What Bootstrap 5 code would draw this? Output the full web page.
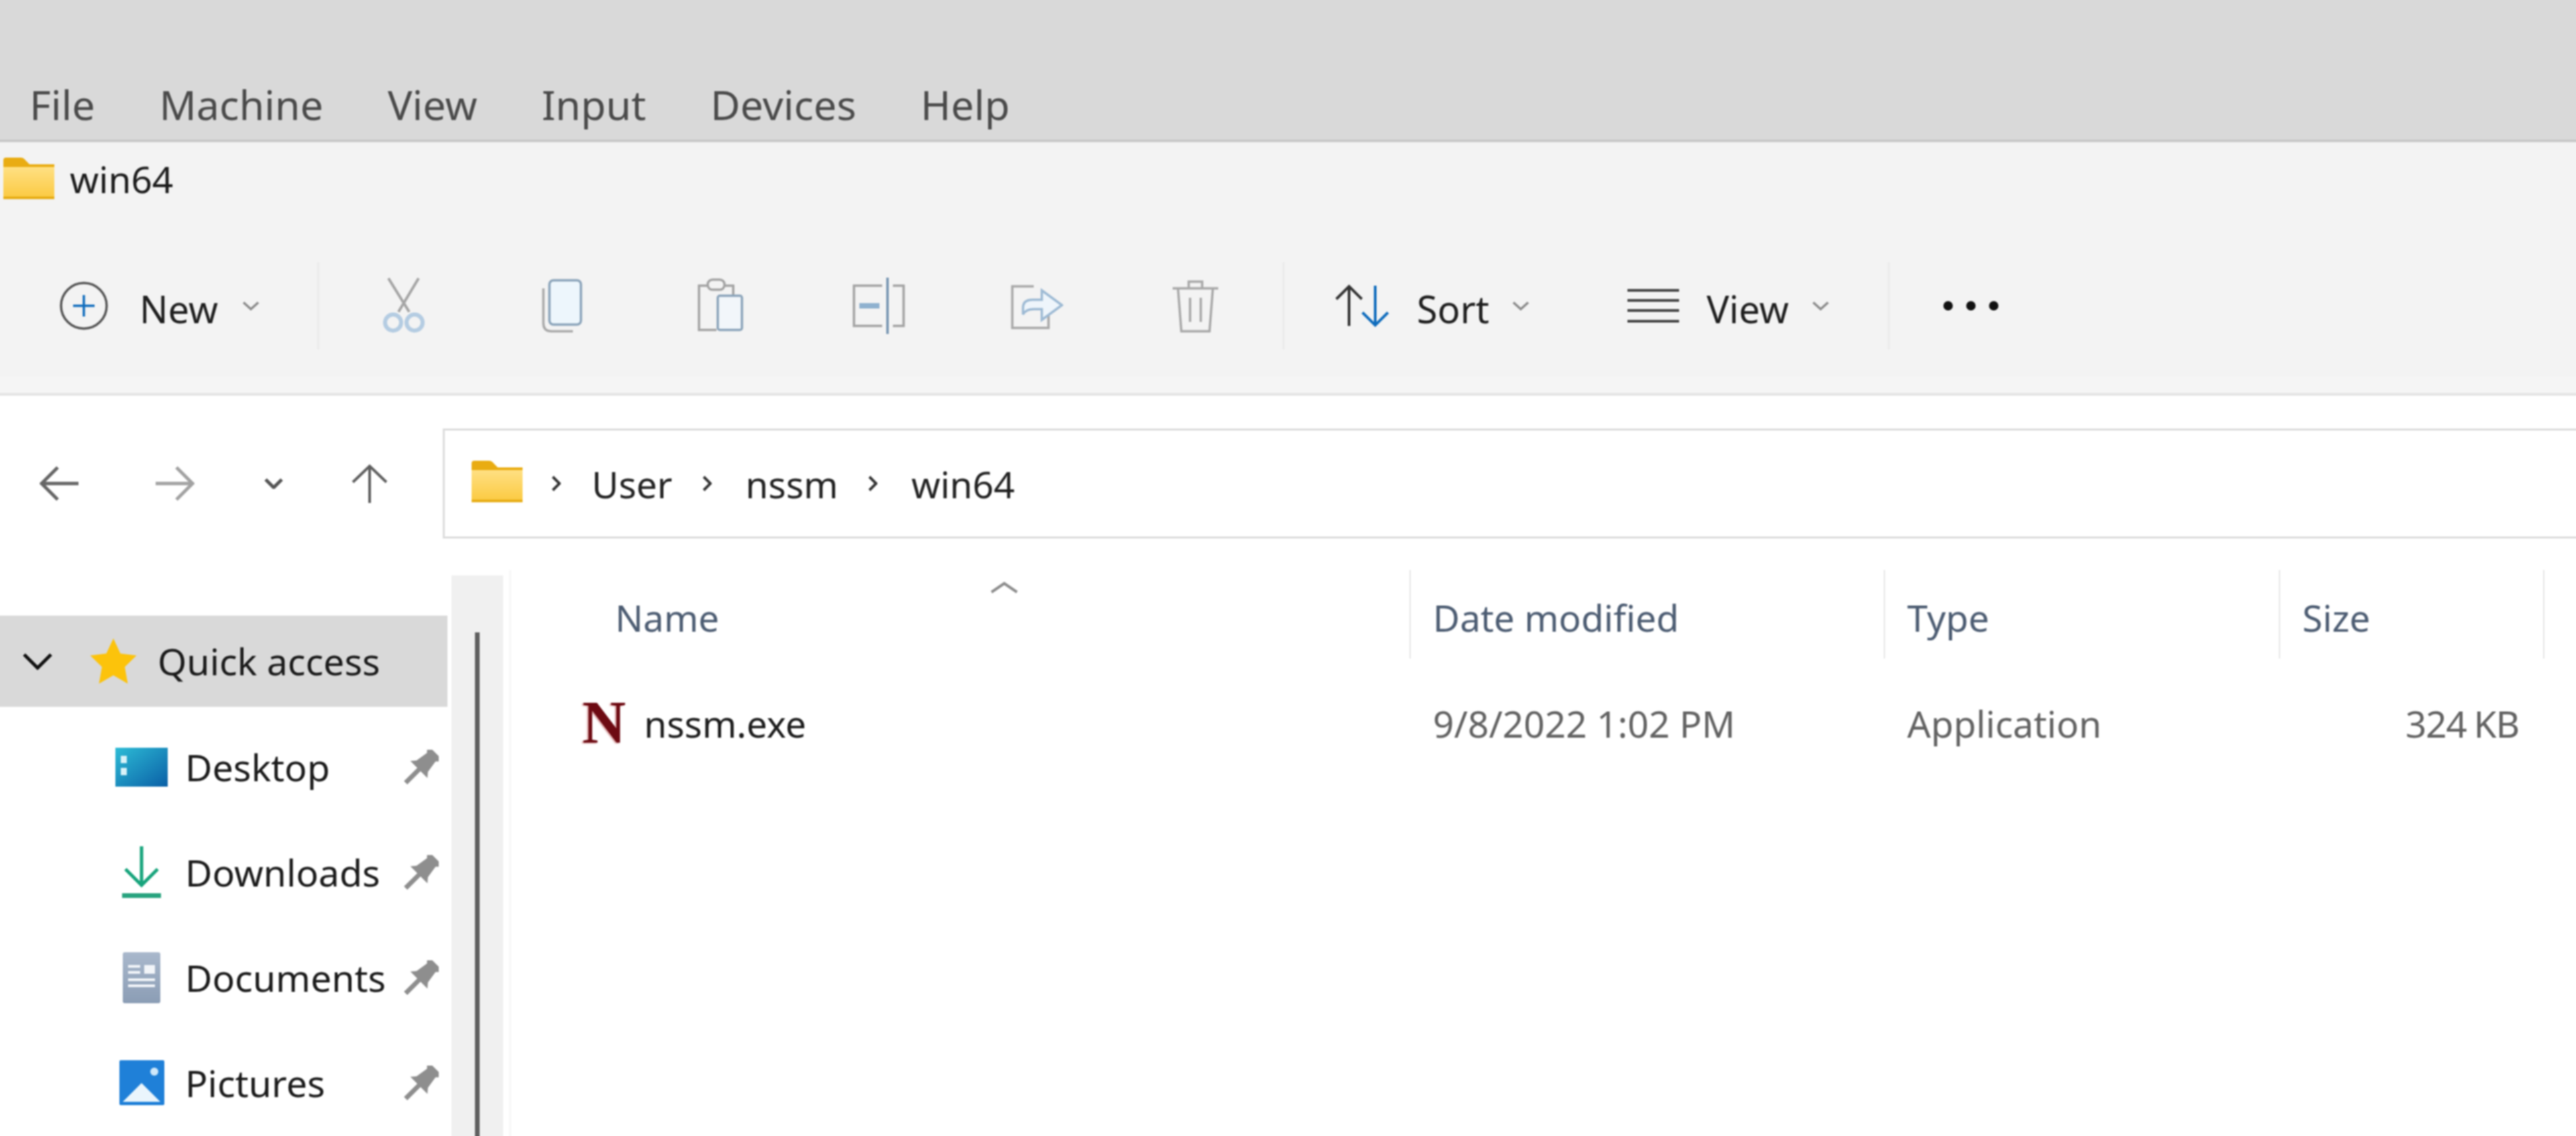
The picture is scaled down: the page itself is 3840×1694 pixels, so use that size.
<!DOCTYPE html>
<html lang="en">
<head>
    <meta charset="UTF-8">
    <meta name="viewport" content="width=device-width, initial-scale=1.0">
    <title>win64 - File Explorer</title>
    <link href="https://cdn.jsdelivr.net/npm/bootstrap@5.3.0/dist/css/bootstrap.min.css" rel="stylesheet">
    <style>
        html, body { height: 100%; background: #fff; }
        body { font-family: "Noto Sans", "Open Sans", sans-serif; font-size: 55px; line-height: 1; color: #1c1c1c; overflow: hidden; }
        svg { display: block; flex: none; }
        .sprite-defs { width: 0; height: 0; position: absolute; }
        /* the screenshot is a soft upscale; 6px bleed keeps the blur off the window edge */
        .vm-shot { height: 1706px; width: 3852px; margin: -6px 0 0 -6px; filter: blur(.9px); }

        /* VirtualBox menu */
        .menu-strip { height: 218px; background: #d9d9d9; border-bottom: 4px solid #c9c9c9; padding: 0 0 22px 50px; gap: 96px; font-size: 61px; color: #4a4a4a; flex: none; }

        /* explorer title + command bar */
        .title-strip { height: 138px; background: #f3f3f3; padding: 0 0 30px 11px; gap: 23px; flex: none; }
        .cmd-bar { height: 211px; background: #f3f3f3; padding-left: 95px; flex: none; }
        .cmd-foot { height: 29px; background: #f5f5f5; border-bottom: 4px solid #e4e4e4; flex: none; }
        .cmd-sep { width: 3px; height: 130px; background: #ebebeb; }
        .cmd-text { font-size: 56px; color: #1e1e1e; position: relative; top: 4px; }
        .tool-icon { width: 236px; }
        .new-label { margin-left: 47px; }
        .new-caret { margin-left: 36px; margin-right: 86px; }
        .tool-first { margin-left: 8px; }
        .sep-two { margin-left: 12px; }
        .sort-icon { margin-left: 75px; }
        .sort-label, .view-label { margin-left: 41px; }
        .sort-caret { margin-left: 34px; margin-right: 146px; }
        .view-caret { margin-left: 34px; margin-right: 87px; }
        .more-dots { margin-left: 80px; }

        /* address row */
        .addr-row { height: 260px; padding-top: 49px; background: #fff; flex: none; }
        .addr-nav { height: 164px; width: 666px; flex: none; padding-left: 65px; }
        .nav-fwd { margin-left: 115px; }
        .nav-down { margin-left: 104px; }
        .nav-up { margin-left: 102px; }
        .addr-box { height: 164px; border: 3px solid #dcdcdc; border-right: 0; padding-left: 40px; background: #fff; font-size: 55px; color: #222; }
        .addr-folder { margin-bottom: 6px; }
        .crumb-sep { margin: 0 50px 0 45px; }
        .crumb-first { margin: 0 46px 0 43px; }

        /* sidebar */
        .body-split { min-height: 0; }
        .side-tree { width: 673px; flex: none; padding-top: 68px; font-size: 55.5px; color: #1a1a1a; }
        .quick-row { height: 136px; background: #d9d9d9; margin-bottom: 11px; padding-left: 39px; }
        .quick-name { margin-left: 31px; }
        .tree-star { margin-left: 55px; }
        .tree-row { height: 157px; }
        .tree-icon { width: 100px; margin-left: 167px; margin-right: 15px; flex: none; }
        .tree-pin { margin-left: auto; margin-right: 13px; }
        .side-track { width: 77px; margin: 8px 0 0 6px; background: #f0f0f0; flex: none; padding-top: 85px; }
        .side-thumb { width: 7px; height: 100%; background: #5f5f5f; }

        /* details view */
        .file-pane { border-left: 3px solid #f7f7f7; margin-left: 9px; position: relative; min-width: 0; }
        .file-grid { display: grid; grid-template-columns: 1341px 707px 589px 394px; }
        .head-cell { height: 132px; border-right: 2px solid #e6e6e6; padding: 8px 0 0 33px; color: #4c5c72; font-size: 55px; }
        .head-name { padding-left: 155px; }
        .sort-arrow { position: absolute; left: 713px; top: 17px; }
        .file-row { margin-top: 61px; color: #626262; font-size: 55px; }
        .file-cell { padding-left: 33px; }
        .file-name { padding-left: 106px; color: #1c1c1c; }
        .n-logo { font-family: "Liberation Serif", serif; font-weight: 700; font-size: 90px; color: #6d0a12; line-height: 70px; width: 92px; flex: none; text-shadow: -2px 1px 2px #d8a0a0; }
        .size-cell { text-align: right; padding-right: 38px; letter-spacing: -1.2px; word-spacing: -2px; }
    </style>
</head>
<body>
    <svg class="sprite-defs" aria-hidden="true">
        <defs>
            <linearGradient id="folderFill" x1="0" y1="0" x2="0" y2="1">
                <stop offset="0" stop-color="#ffe083"/>
                <stop offset="1" stop-color="#fbc93f"/>
            </linearGradient>
            <linearGradient id="deskFill" x1="0" y1="0" x2="1" y2="1">
                <stop offset="0" stop-color="#2dbcd6"/>
                <stop offset="1" stop-color="#0a5fa6"/>
            </linearGradient>
            <linearGradient id="docFill" x1="0" y1="0" x2="0" y2="1">
                <stop offset="0" stop-color="#a9b8cc"/>
                <stop offset="1" stop-color="#8b9db5"/>
            </linearGradient>
            <symbol id="folderIco" viewBox="0 0 76 62">
                <path d="M0 4q0-4 4-4h22q4 0 7 4l6 6h37v14H0z" fill="#e9ac12"/>
                <path d="M0 14h76v48H0z" fill="url(#folderFill)"/>
                <path d="M0 58h76v4H0z" fill="#e7ae18"/>
            </symbol>
            <symbol id="pinIco" viewBox="0 0 52 52">
                <g transform="rotate(45 26 26)" fill="#8e8e8e">
                    <path d="M14 -4h24v6l-3 3 3 19 6 7H8l6-7 3-19-3-3z"/>
                    <rect x="22.500" y="29" width="7" height="30"/>
                </g>
            </symbol>
            <symbol id="caretIco" viewBox="0 0 26 16">
                <path d="M2 3l11 10L24 3" fill="none" stroke="#8b8b8b" stroke-width="3.5"/>
            </symbol>
        </defs>
    </svg>

    <div class="vm-shot d-flex flex-column overflow-hidden">
        <nav class="menu-strip d-flex align-items-end">
            <span>File</span><span>Machine</span><span>View</span><span>Input</span><span>Devices</span><span>Help</span>
        </nav>

        <div class="title-strip d-flex align-items-center">
            <svg width="76" height="62"><use href="#folderIco"/></svg>
            <span>win64</span>
        </div>

        <div class="cmd-bar d-flex align-items-center">
            <svg width="72" height="72" viewBox="0 0 72 72"><circle cx="36" cy="36" r="34" fill="none" stroke="#555" stroke-width="3.5"/><path d="M36 20v32M20 36h32" stroke="#0f6cbd" stroke-width="3.5"/></svg>
            <span class="cmd-text new-label">New</span>
            <svg class="new-caret" width="26" height="16"><use href="#caretIco"/></svg>
            <div class="cmd-sep"></div>

            <div class="tool-icon tool-first d-flex justify-content-center">
                <svg width="68" height="84" viewBox="0 0 68 84"><path d="M11 1l31 50M56 1L26 51" stroke="#a5a5a5" stroke-width="4" fill="none"/><circle cx="18" cy="67" r="12" fill="none" stroke="#b4cce2" stroke-width="6"/><circle cx="50" cy="67" r="12" fill="none" stroke="#b4cce2" stroke-width="6"/></svg>
            </div>
            <div class="tool-icon d-flex justify-content-center">
                <svg width="60" height="80" viewBox="0 0 60 80"><rect x="11" y="2" width="47" height="66" rx="6" fill="#edf6fc" stroke="#8ba4ba" stroke-width="3.5"/><path d="M2 14v52q0 12 12 12h32" fill="none" stroke="#a9a9a9" stroke-width="3.5"/></svg>
            </div>
            <div class="tool-icon d-flex justify-content-center">
                <svg width="68" height="84" viewBox="0 0 68 84"><path d="M28 78H2V12h13M40 12h13v14" fill="none" stroke="#a3a3a3" stroke-width="3.5"/><rect x="15" y="3" width="25" height="15" rx="7" fill="none" stroke="#a3a3a3" stroke-width="3.5"/><rect x="30" y="27" width="36" height="51" rx="3" fill="#f2f6fa" stroke="#8ba4ba" stroke-width="3.5"/></svg>
            </div>
            <div class="tool-icon d-flex justify-content-center">
                <svg width="78" height="84" viewBox="0 0 78 84"><path d="M44 12H2v60h42M60 12h16v60H60" fill="none" stroke="#a3a3a3" stroke-width="3.5"/><path d="M52 0v84" stroke="#6f8fae" stroke-width="3.5"/><rect x="10" y="38" width="30" height="8" fill="#8fb1cf"/></svg>
            </div>
            <div class="tool-icon d-flex justify-content-center">
                <svg width="78" height="70" viewBox="0 0 78 70"><path d="M34 6H2v62h54V48" fill="none" stroke="#a8a8a8" stroke-width="3.5"/><path d="M18 48V38q0-12 14-12h14V12l30 22-30 22V40H34q-12 0-16 8z" fill="#eef5fb" stroke="#9dbad4" stroke-width="3.5"/></svg>
            </div>
            <div class="tool-icon d-flex justify-content-center">
                <svg width="72" height="80" viewBox="0 0 72 80"><path d="M2 14h68M26 14V4h20v10M10 14l5 64h42l5-64M28 28v36M44 28v36" fill="none" stroke="#a8a8a8" stroke-width="3.5"/></svg>
            </div>

            <div class="cmd-sep sep-two"></div>

            <svg class="sort-icon" width="81" height="64" viewBox="0 0 81 64"><path d="M21 62V3M2 22L21 3l19 19" fill="none" stroke="#333" stroke-width="4"/><path d="M60 2v59M41 42l19 19 19-19" fill="none" stroke="#0f6cbd" stroke-width="4"/></svg>
            <span class="cmd-text sort-label">Sort</span>
            <svg class="sort-caret" width="26" height="16"><use href="#caretIco"/></svg>
            <svg width="77" height="50" viewBox="0 0 77 50"><path d="M0 2h77M0 17h77M0 32h77M0 48h77" stroke="#444" stroke-width="4"/></svg>
            <span class="cmd-text view-label">View</span>
            <svg class="view-caret" width="26" height="16"><use href="#caretIco"/></svg>
            <div class="cmd-sep"></div>
            <svg class="more-dots" width="82" height="14" viewBox="0 0 82 14"><circle cx="7" cy="7" r="7" fill="#111"/><circle cx="41" cy="7" r="7" fill="#111"/><circle cx="75" cy="7" r="7" fill="#111"/></svg>
        </div>
        <div class="cmd-foot"></div>

        <div class="addr-row d-flex">
            <div class="addr-nav d-flex align-items-center">
                <svg width="58" height="52" viewBox="0 0 58 52"><path d="M58 26H3M27 2L3 26l24 24" fill="none" stroke="#666" stroke-width="5"/></svg>
                <svg class="nav-fwd" width="58" height="52" viewBox="0 0 58 52"><path d="M0 26h55M31 2l24 24-24 24" fill="none" stroke="#a2a2a2" stroke-width="5"/></svg>
                <svg class="nav-down" width="28" height="16" viewBox="0 0 28 16"><path d="M2 2l12 12L26 2" fill="none" stroke="#555" stroke-width="5"/></svg>
                <svg class="nav-up" width="54" height="58" viewBox="0 0 54 58"><path d="M27 58V3M2 27L27 3l25 24" fill="none" stroke="#5f5f5f" stroke-width="4"/></svg>
            </div>
            <div class="addr-box flex-grow-1 d-flex align-items-center">
                <svg class="addr-folder" width="76" height="62"><use href="#folderIco"/></svg>
                <svg class="crumb-first" width="14" height="24" viewBox="0 0 14 24"><path d="M2 2l10 10L2 22" fill="none" stroke="#333" stroke-width="4"/></svg>
                <span>User</span>
                <svg class="crumb-sep" width="14" height="24" viewBox="0 0 14 24"><path d="M2 2l10 10L2 22" fill="none" stroke="#333" stroke-width="4"/></svg>
                <span>nssm</span>
                <svg class="crumb-sep" width="14" height="24" viewBox="0 0 14 24"><path d="M2 2l10 10L2 22" fill="none" stroke="#333" stroke-width="4"/></svg>
                <span>win64</span>
            </div>
        </div>

        <div class="body-split d-flex flex-grow-1">
            <aside class="side-tree">
                <div class="quick-row d-flex align-items-center">
                    <svg width="46" height="26" viewBox="0 0 46 26"><path d="M3 3l20 20L43 3" fill="none" stroke="#111" stroke-width="5"/></svg>
                    <svg class="tree-star" width="70" height="70" viewBox="0 0 70 70"><path d="M35 1l10.500 22.500 24 3-17.500 17 4.500 25L35 56 13.500 68.500l4.500-25L.5 26.500l24-3z" fill="#fcc30b"/></svg>
                    <span class="quick-name">Quick access</span>
                </div>
                <div class="tree-row d-flex align-items-center">
                    <div class="tree-icon d-flex justify-content-center">
                        <svg width="78" height="58" viewBox="0 0 78 58"><rect width="78" height="58" fill="url(#deskFill)"/><rect x="8" y="12" width="9" height="11" fill="#d9f2f8"/><rect x="8" y="30" width="9" height="11" fill="#d9f2f8"/></svg>
                    </div>
                    <span>Desktop</span>
                    <svg class="tree-pin" width="52" height="52"><use href="#pinIco"/></svg>
                </div>
                <div class="tree-row d-flex align-items-center">
                    <div class="tree-icon d-flex justify-content-center">
                        <svg width="58" height="78" viewBox="0 0 58 78"><path d="M29 0v58M5 34l24 24 24-24" fill="none" stroke="#17a47c" stroke-width="5"/><rect y="70" width="58" height="7" fill="#27a37e"/></svg>
                    </div>
                    <span>Downloads</span>
                    <svg class="tree-pin" width="52" height="52"><use href="#pinIco"/></svg>
                </div>
                <div class="tree-row d-flex align-items-center">
                    <div class="tree-icon d-flex justify-content-center">
                        <svg width="56" height="76" viewBox="0 0 56 76"><rect width="56" height="76" rx="3" fill="url(#docFill)"/><path d="M8 19h18v4H8zM8 28h18v4H8zM32 19h16v13H32zM8 39h40v4H8zM8 48h40v4H8z" fill="#f2f5f9"/></svg>
                    </div>
                    <span>Documents</span>
                    <svg class="tree-pin" width="52" height="52"><use href="#pinIco"/></svg>
                </div>
                <div class="tree-row d-flex align-items-center">
                    <div class="tree-icon d-flex justify-content-center">
                        <svg width="67" height="67" viewBox="0 0 67 67"><rect width="67" height="67" rx="2" fill="#1f80d8"/><path d="M5 62l28-28 28 28z" fill="#eaf5fc"/><circle cx="52" cy="17" r="6" fill="#cfe8fa"/></svg>
                    </div>
                    <span>Pictures</span>
                    <svg class="tree-pin" width="52" height="52"><use href="#pinIco"/></svg>
                </div>
            </aside>
            <div class="side-track d-flex justify-content-center">
                <div class="side-thumb"></div>
            </div>
            <main class="file-pane flex-grow-1">
                <svg class="sort-arrow" width="44" height="18" viewBox="0 0 44 18"><path d="M3 16L22 3l19 13" fill="none" stroke="#8d8d8d" stroke-width="4"/></svg>
                <div class="file-grid">
                    <div class="head-cell head-name d-flex align-items-center">Name</div>
                    <div class="head-cell d-flex align-items-center">Date modified</div>
                    <div class="head-cell d-flex align-items-center">Type</div>
                    <div class="head-cell d-flex align-items-center">Size</div>
                </div>
                <div class="file-grid file-row align-items-center">
                    <div class="file-cell file-name d-flex align-items-center"><span class="n-logo">N</span><span>nssm.exe</span></div>
                    <div class="file-cell">9/8/2022 1:02 PM</div>
                    <div class="file-cell">Application</div>
                    <div class="file-cell size-cell">324 KB</div>
                </div>
            </main>
        </div>
    </div>

    <script src="https://cdn.jsdelivr.net/npm/bootstrap@5.3.0/dist/js/bootstrap.bundle.min.js"></script>
</body>
</html>
